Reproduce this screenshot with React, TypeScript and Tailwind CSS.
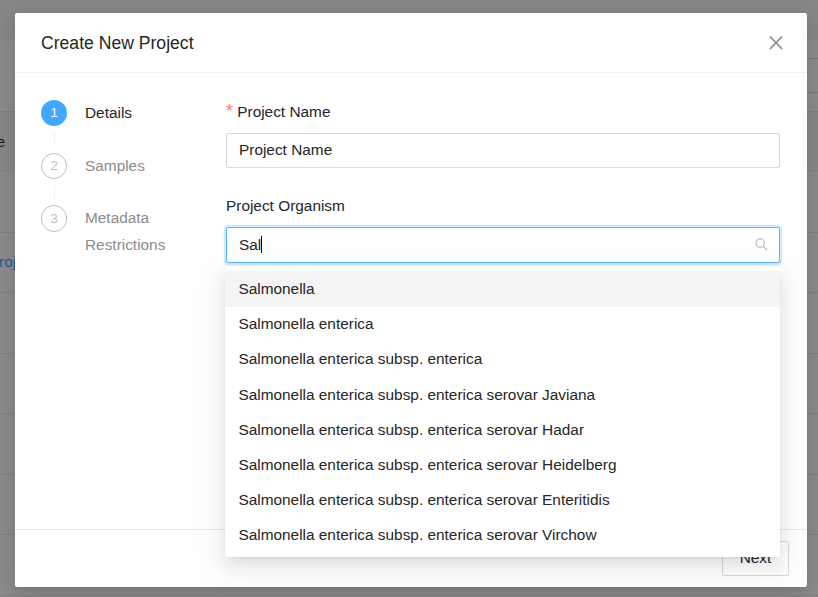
import React from "react";

const organisms = [
  "Salmonella",
  "Salmonella enterica",
  "Salmonella enterica subsp. enterica",
  "Salmonella enterica subsp. enterica serovar Javiana",
  "Salmonella enterica subsp. enterica serovar Hadar",
  "Salmonella enterica subsp. enterica serovar Heidelberg",
  "Salmonella enterica subsp. enterica serovar Enteritidis",
  "Salmonella enterica subsp. enterica serovar Virchow",
];

function PageBehind() {
  return (
    <div className="flex h-full flex-col overflow-hidden bg-[#8c8c8c] text-[15.4px]">
      <div className="h-10 shrink-0 bg-[#868789]" />
      <div className="flex h-[72px] shrink-0 justify-end border-b border-[#808080] pt-[18px]">
        <div className="h-[35px] w-20 border-y border-[#777777]" />
      </div>
      <div className="flex h-[60px] shrink-0 items-center border-b border-[#848484] bg-[#888888] text-[#171717]">
        <span className="-ml-[3.5px]">e</span>
      </div>
      <div className="h-[61px] shrink-0 border-b border-[#828282]" />
      <div className="flex h-[60px] shrink-0 items-center border-b border-[#828282] pb-[2px] text-[#235ca6]">
        <span className="-ml-px">roj</span>
      </div>
      <div className="h-[61px] shrink-0 border-b border-[#828282]" />
      <div className="h-[60px] shrink-0 border-b border-[#828282]" />
      <div className="h-[61px] shrink-0 border-b border-[#828282]" />
      <div className="h-[60px] shrink-0 border-b border-[#828282]" />
      <div className="h-[61px] shrink-0 border-b border-[#828282]" />
    </div>
  );
}

function Steps() {
  return (
    <ol className="w-[185px] shrink-0 pt-[27px] leading-[26.4px] text-[#8c8c8c]">
      <li className="flex h-[52.8px] gap-[17.6px]">
        <div className="flex w-[26.4px] flex-col items-center">
          <span className="flex h-[26.4px] w-[26.4px] shrink-0 items-center justify-center rounded-full bg-[#40a9ff] text-[13.2px] text-white">1</span>
          <span className="mt-[6.6px] ml-px h-[13px] w-px bg-[#f0f0f0]" />
        </div>
        <span className="text-[#262626]">Details</span>
      </li>
      <li className="flex h-[52.4px] gap-[17.6px]">
        <div className="flex w-[26.4px] flex-col items-center">
          <span className="flex h-[26.4px] w-[26.4px] shrink-0 items-center justify-center rounded-full border border-[#bfbfbf] text-[13.2px] text-[#bfbfbf]">2</span>
          <span className="mt-[6.6px] ml-px h-[13px] w-px bg-[#f0f0f0]" />
        </div>
        <span>Samples</span>
      </li>
      <li className="flex gap-[17.6px]">
        <span className="flex h-[26.4px] w-[26.4px] shrink-0 items-center justify-center rounded-full border border-[#bfbfbf] pt-px text-[13.2px] text-[#bfbfbf]">3</span>
        <span className="w-[90px]">Metadata Restrictions</span>
      </li>
    </ol>
  );
}

function Suggestions() {
  return (
    <ul className="absolute top-[40px] -left-[1px] z-10 h-[290px] w-[555px] rounded-[2px] bg-white py-1 shadow-[0_3.3px_6.6px_-4.4px_rgba(0,0,0,0.12),0_6.6px_17.6px_rgba(0,0,0,0.08),0_9.9px_30.8px_8.8px_rgba(0,0,0,0.05)]">
      {organisms.map((name, i) => (
        <li
          key={name}
          className={
            i === 0
              ? "-mb-[0.8px] h-9 bg-[#f4f4f4] px-[13.4px] leading-[35.2px]"
              : "h-[35.2px] px-[13.4px] leading-[35.2px]"
          }
        >
          {name}
        </li>
      ))}
    </ul>
  );
}

export default function App() {
  return (
    <div className="relative h-[597px] w-[818px] overflow-hidden font-['Liberation_Sans',Arial,sans-serif] text-[15.4px] text-[#262626]">
      <PageBehind />
      <div className="absolute inset-0 flex px-[15px] pt-[13px]">
        <div
          role="dialog"
          className="flex h-[574px] w-[792px] shrink-0 flex-col rounded-[2px] bg-white shadow-[0_3.3px_6.6px_-4.4px_rgba(0,0,0,0.12),0_6.6px_17.6px_rgba(0,0,0,0.08),0_9.9px_30.8px_8.8px_rgba(0,0,0,0.05)]"
        >
          <header className="flex h-[60px] shrink-0 items-center justify-between border-b border-[#f0f0f0] pr-[22px] pl-[26px]">
            <h1 className="text-[17.6px] leading-[24px]">Create New Project</h1>
            <svg width="18" height="18" viewBox="0 0 18 18" fill="none" stroke="#8c8c8c" strokeWidth="1.8">
              <path d="M3 2.5L15 15M15 2.5L3 15" />
            </svg>
          </header>
          <main className="flex h-[456px] shrink-0 pl-[26px]">
            <Steps />
            <div className="w-[554px] pt-[26px]">
              <label className="flex h-[27px] items-center pb-[2px]">
                <span className="mr-[4.4px] pb-px text-[17.6px] leading-4 text-[#ff7875]">*</span>Project Name
              </label>
              <div className="mt-[7px] flex h-[35px] items-center rounded-[2px] border border-[#d9d9d9] px-3 pb-[2px]">
                Project Name
              </div>
              <label className="mt-[25px] flex h-[26px] items-center">Project Organism</label>
              <div className="relative mt-2 h-9">
                <div className="flex h-full items-center justify-between rounded-[2px] border border-[#5cb6ff] pr-[10.5px] pl-3 shadow-[0_0_0_2.2px_rgba(24,144,255,0.2)]">
                  <span className="flex items-center">
                    Sal
                    <span className="h-[17px] w-px bg-black" />
                  </span>
                  <svg className="mb-px" width="15" height="15" viewBox="0 0 15 15" fill="none" stroke="#bfbfbf" strokeWidth="1.3">
                    <circle cx="6.2" cy="6.1" r="4.2" />
                    <path d="M9.2 9.1L13.2 13.1" />
                  </svg>
                </div>
                <Suggestions />
              </div>
            </div>
          </main>
          <footer className="flex grow justify-end border-t border-[#ebebeb] pt-[11px] pr-[18px]">
            <button className="flex h-[35px] w-[67px] items-center justify-center rounded-[2px] border border-[#d9d9d9] bg-white pb-[2px]">
              Next
            </button>
          </footer>
        </div>
      </div>
    </div>
  );
}
